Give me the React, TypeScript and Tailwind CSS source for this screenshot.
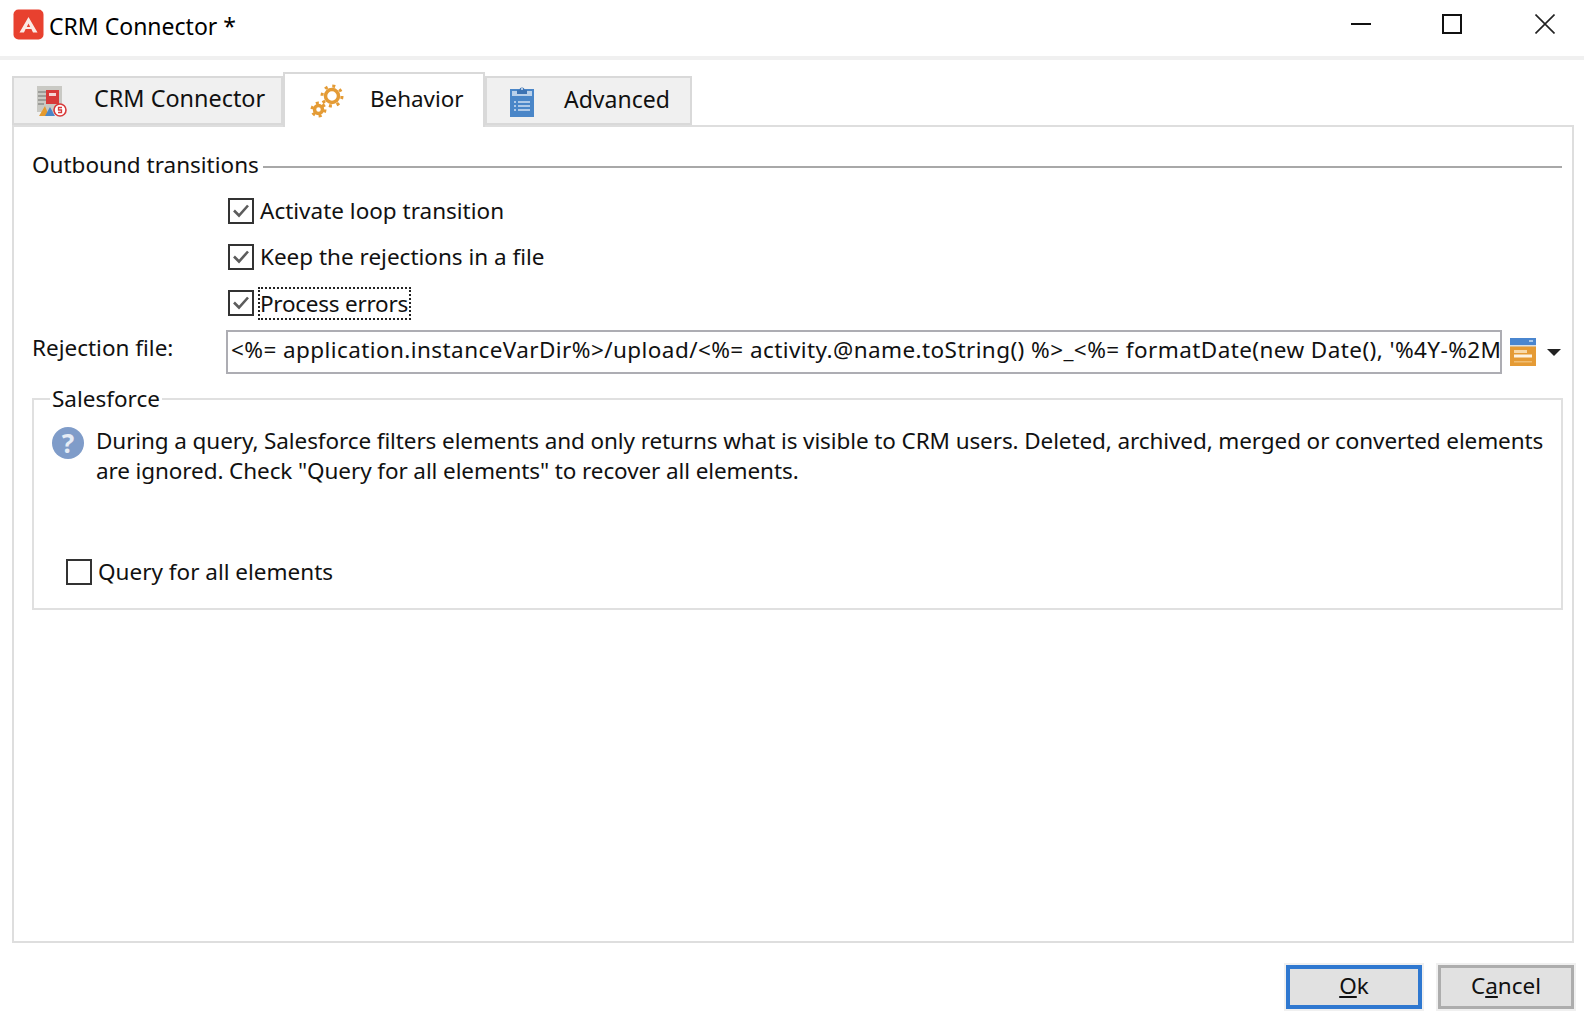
const font = "[font-family:'Noto_Sans','Open_Sans',sans-serif]"

function AppLogo() {
  return (
    <svg width="31" height="31" viewBox="0 0 31 31">
      <rect x="0.5" y="0.5" width="30" height="30" rx="5" fill="#e8412f" />
      <path d="M15.500 8L24.500 23.500H20L18.400 20H12.600L11 23.500H6.500L15.500 8ZM15.500 14.500L13.800 18H17.200L15.500 14.500Z" fill="#fbeae6" />
    </svg>
  )
}

function CrmIcon() {
  return (
    <svg width="32" height="32" viewBox="0 0 32 32">
      <rect x="1" y="1" width="25" height="26" fill="#c9c9c4" />
      <path d="M2 7h8M2 11h8M2 15h8M2 19h6" stroke="#8f8f8a" strokeWidth="1.500" />
      <rect x="10" y="5" width="13" height="14" fill="#d83a3a" />
      <rect x="13" y="8" width="7" height="3" fill="#f6d4d4" />
      <path d="M3 31L9 21L13 31Z" fill="#e49a2e" />
      <path d="M9 31L14 22L19 31Z" fill="#4a86c8" />
      <circle cx="24" cy="25" r="6" fill="#fff" stroke="#d83a3a" strokeWidth="1.600" />
      <path d="M26 22.500h-3.500v2.500h3v2.500h-3.500" fill="none" stroke="#d83a3a" strokeWidth="1.300" />
    </svg>
  )
}

function GearsIcon() {
  return (
    <svg width="34" height="34" viewBox="0 0 34 34" fill="none" stroke="#e49b35">
      <circle cx="22" cy="12" r="6.500" strokeWidth="3.500" />
      <circle cx="22" cy="12" r="10" strokeWidth="3" strokeDasharray="3 4.850" />
      <circle cx="8.500" cy="25.500" r="4" strokeWidth="3.500" />
      <circle cx="8.500" cy="25.500" r="6.500" strokeWidth="3" strokeDasharray="3 3.800" />
    </svg>
  )
}

function ClipboardIcon() {
  return (
    <svg width="26" height="34" viewBox="0 0 26 34">
      <rect x="1" y="5" width="24" height="28" fill="#4a86c8" />
      <rect x="3" y="7" width="20" height="5" fill="#b9d0ea" />
      <path d="M8 10V6h2.500a2.500 2.500 0 0 1 5 0H18v4Z" fill="#3d73b3" />
      <circle cx="13" cy="5" r="1" fill="#dbe7f4" />
      <path d="M5 18h2M9 18h12M5 22h2M9 22h12M5 26h2M9 26h12" stroke="#cfe0f2" strokeWidth="1.500" />
    </svg>
  )
}

function FileIcon() {
  return (
    <svg width="26" height="28" viewBox="0 0 26 28">
      <rect width="26" height="28" fill="#e59b35" />
      <rect width="26" height="7" fill="#4a86cf" />
      <rect y="7" width="26" height="1.500" fill="#d9dfe3" />
      <rect x="19" y="2" width="4" height="2" fill="#a9c9ec" />
      <rect x="4" y="12" width="13" height="3" fill="#f8d9a8" />
      <rect x="4" y="16.500" width="18" height="3" fill="#fdf3e2" />
      <rect x="4" y="23" width="18" height="1.500" fill="#f0bd72" />
    </svg>
  )
}

function HelpIcon() {
  return (
    <div className="flex h-8 w-8 shrink-0 items-center justify-center rounded-full bg-[#7f9cc9] text-[26px] leading-none font-bold text-[#e6ecf5]">
      ?
    </div>
  )
}

function Checkbox({ checked }: { checked?: boolean }) {
  return (
    <div className="flex h-[26px] w-[26px] shrink-0 items-center justify-center border-2 border-[#333333] bg-white">
      {checked && (
        <svg width="20" height="20" viewBox="0 0 20 20" fill="none">
          <path d="M3 9.500l5 5L17 4.500" stroke="#5c5c5c" strokeWidth="2.600" />
        </svg>
      )}
    </div>
  )
}

function Tab({ label, icon, active, iconBox, width, textSize }: { label: string; icon: React.ReactNode; active?: boolean; iconBox: string; width: string; textSize: string }) {
  return (
    <div
      className={`flex items-center border-2 border-[#d9d9d9] ${width} ${
        active ? 'z-10 -mb-0.5 h-[55px] border-b-0 bg-white' : 'h-[49px] bg-[#f0f0f0]'
      }`}
    >
      <div className={iconBox}>{icon}</div>
      <span className={`mb-[3px] leading-none text-[#111111] ${textSize}`}>{label}</span>
    </div>
  )
}

export default function App() {
  return (
    <div className={`${font} flex h-[1020px] w-[1584px] flex-col overflow-hidden bg-white text-[22.5px] text-[#111111]`}>
      {/* title bar */}
      <div className="flex h-14 items-start pt-[9px] pl-[13px]">
        <AppLogo />
        <span className="mt-[2px] ml-[5px] text-[23px] leading-[30px] text-black">CRM Connector *</span>
        <div className="mt-[5px] ml-auto flex items-center gap-[71px] pr-[29px]">
          <svg width="20" height="20" viewBox="0 0 20 20"><path d="M0 10h20" stroke="#111111" strokeWidth="2" /></svg>
          <svg width="20" height="20" viewBox="0 0 20 20" fill="none"><rect x="1" y="1" width="18" height="18" stroke="#111111" strokeWidth="2" /></svg>
          <svg className="ml-[2px]" width="20" height="20" viewBox="0 0 20 20" fill="none"><path d="M0.500 0.500l19 19M19.500 0.500l-19 19" stroke="#222222" strokeWidth="1.600" /></svg>
        </div>
      </div>
      <div className="h-1 bg-[#f0f0f0]" />

      <div className="flex flex-1 flex-col pr-[10px] pl-3">
        {/* tabs */}
        <div className="mt-3 flex h-[53px] items-end">
          <Tab label="CRM Connector" textSize="text-[23.4px]" width="w-[271px]" iconBox="ml-[22px] mr-[26px] w-[32px]" icon={<CrmIcon />} />
          <Tab label="Behavior" textSize="text-[22.4px]" active width="w-[202px]" iconBox="ml-[25px] mr-[26px] w-[34px]" icon={<GearsIcon />} />
          <Tab label="Advanced" textSize="text-[23px]" width="w-[207px]" iconBox="ml-[22px] mr-[29px] w-[26px]" icon={<ClipboardIcon />} />
        </div>

        {/* panel */}
        <div className="flex h-[818px] flex-col border-2 border-[#dedede] pt-6 pr-2 pl-[18px]">
          <div className="flex h-8 items-center pr-0.5">
            <span className="mb-1 leading-none">Outbound transitions</span>
            <div className="ml-1 h-0.5 flex-1 bg-[#a8a8a8]" />
          </div>

          <div className="mt-[15px] flex flex-col gap-5 pl-[196px]">
            <label className="flex h-[26px] items-center gap-[6px]"><Checkbox checked /><span>Activate loop transition</span></label>
            <label className="flex h-[26px] items-center gap-[6px]"><Checkbox checked /><span>Keep the rejections in a file</span></label>
            <label className="flex h-[26px] items-center gap-1"><Checkbox checked /><span className="pr-[3px] pl-0.5 leading-[33px] tracking-[-0.25px] outline-2 -outline-offset-2 outline-[#222222] outline-dotted">Process errors</span></label>
          </div>

          <div className="mt-[14px] flex h-[44px] items-center">
            <span className="w-[194px] shrink-0 pb-2">Rejection file:</span>
            <div className="flex h-full w-[1276px] items-center overflow-hidden border-2 border-[#adadb3] pb-1 pl-[3px] tracking-[0.42px] whitespace-nowrap">
              {"<%= application.instanceVarDir%>/upload/<%= activity.@name.toString() %>_<%= formatDate(new Date(), '%4Y-%2M"}
            </div>
            <div className="ml-[8px]"><FileIcon /></div>
            <div className="ml-[11px] h-0 w-0 border-x-[7px] border-t-[7px] border-x-transparent border-t-[#222222]" />
          </div>

          <div className="relative mt-[24px] mr-[1px] flex h-[212px] flex-col border-2 border-[#e0e0e0] pt-[27px] pr-1 pl-[18px]">
            <span className="absolute -top-[16px] left-4 bg-white px-0.5 leading-[30px]">Salesforce</span>
            <div className="flex gap-3">
              <HelpIcon />
              <p className="-mt-[1px] leading-[30px] tracking-[-0.1px]">
                During a query, Salesforce filters elements and only returns what is visible to CRM users. Deleted, archived, merged or converted elements are ignored. Check "Query for all elements" to recover all elements.
              </p>
            </div>
            <label className="mt-auto mb-[23px] ml-[14px] flex h-[26px] items-center gap-[6px]"><Checkbox /><span>Query for all elements</span></label>
          </div>
        </div>

        {/* footer */}
        <div className="mt-[20px] -mr-0.5 flex justify-end gap-3">
          <button className="h-[48px] w-[140px] border-2 border-[#f0f0f0]">
            <span className="flex h-full items-center justify-center border-4 border-[#2f78d0] bg-[#e1e1e1] pb-0.5"><span><u>O</u>k</span></span>
          </button>
          <button className="h-[48px] w-[140px] border-2 border-[#f0f0f0]">
            <span className="flex h-full items-center justify-center border-[3px] border-[#adadad] bg-[#e1e1e1] pb-0.5"><span>C<u>a</u>ncel</span></span>
          </button>
        </div>
      </div>
    </div>
  )
}
